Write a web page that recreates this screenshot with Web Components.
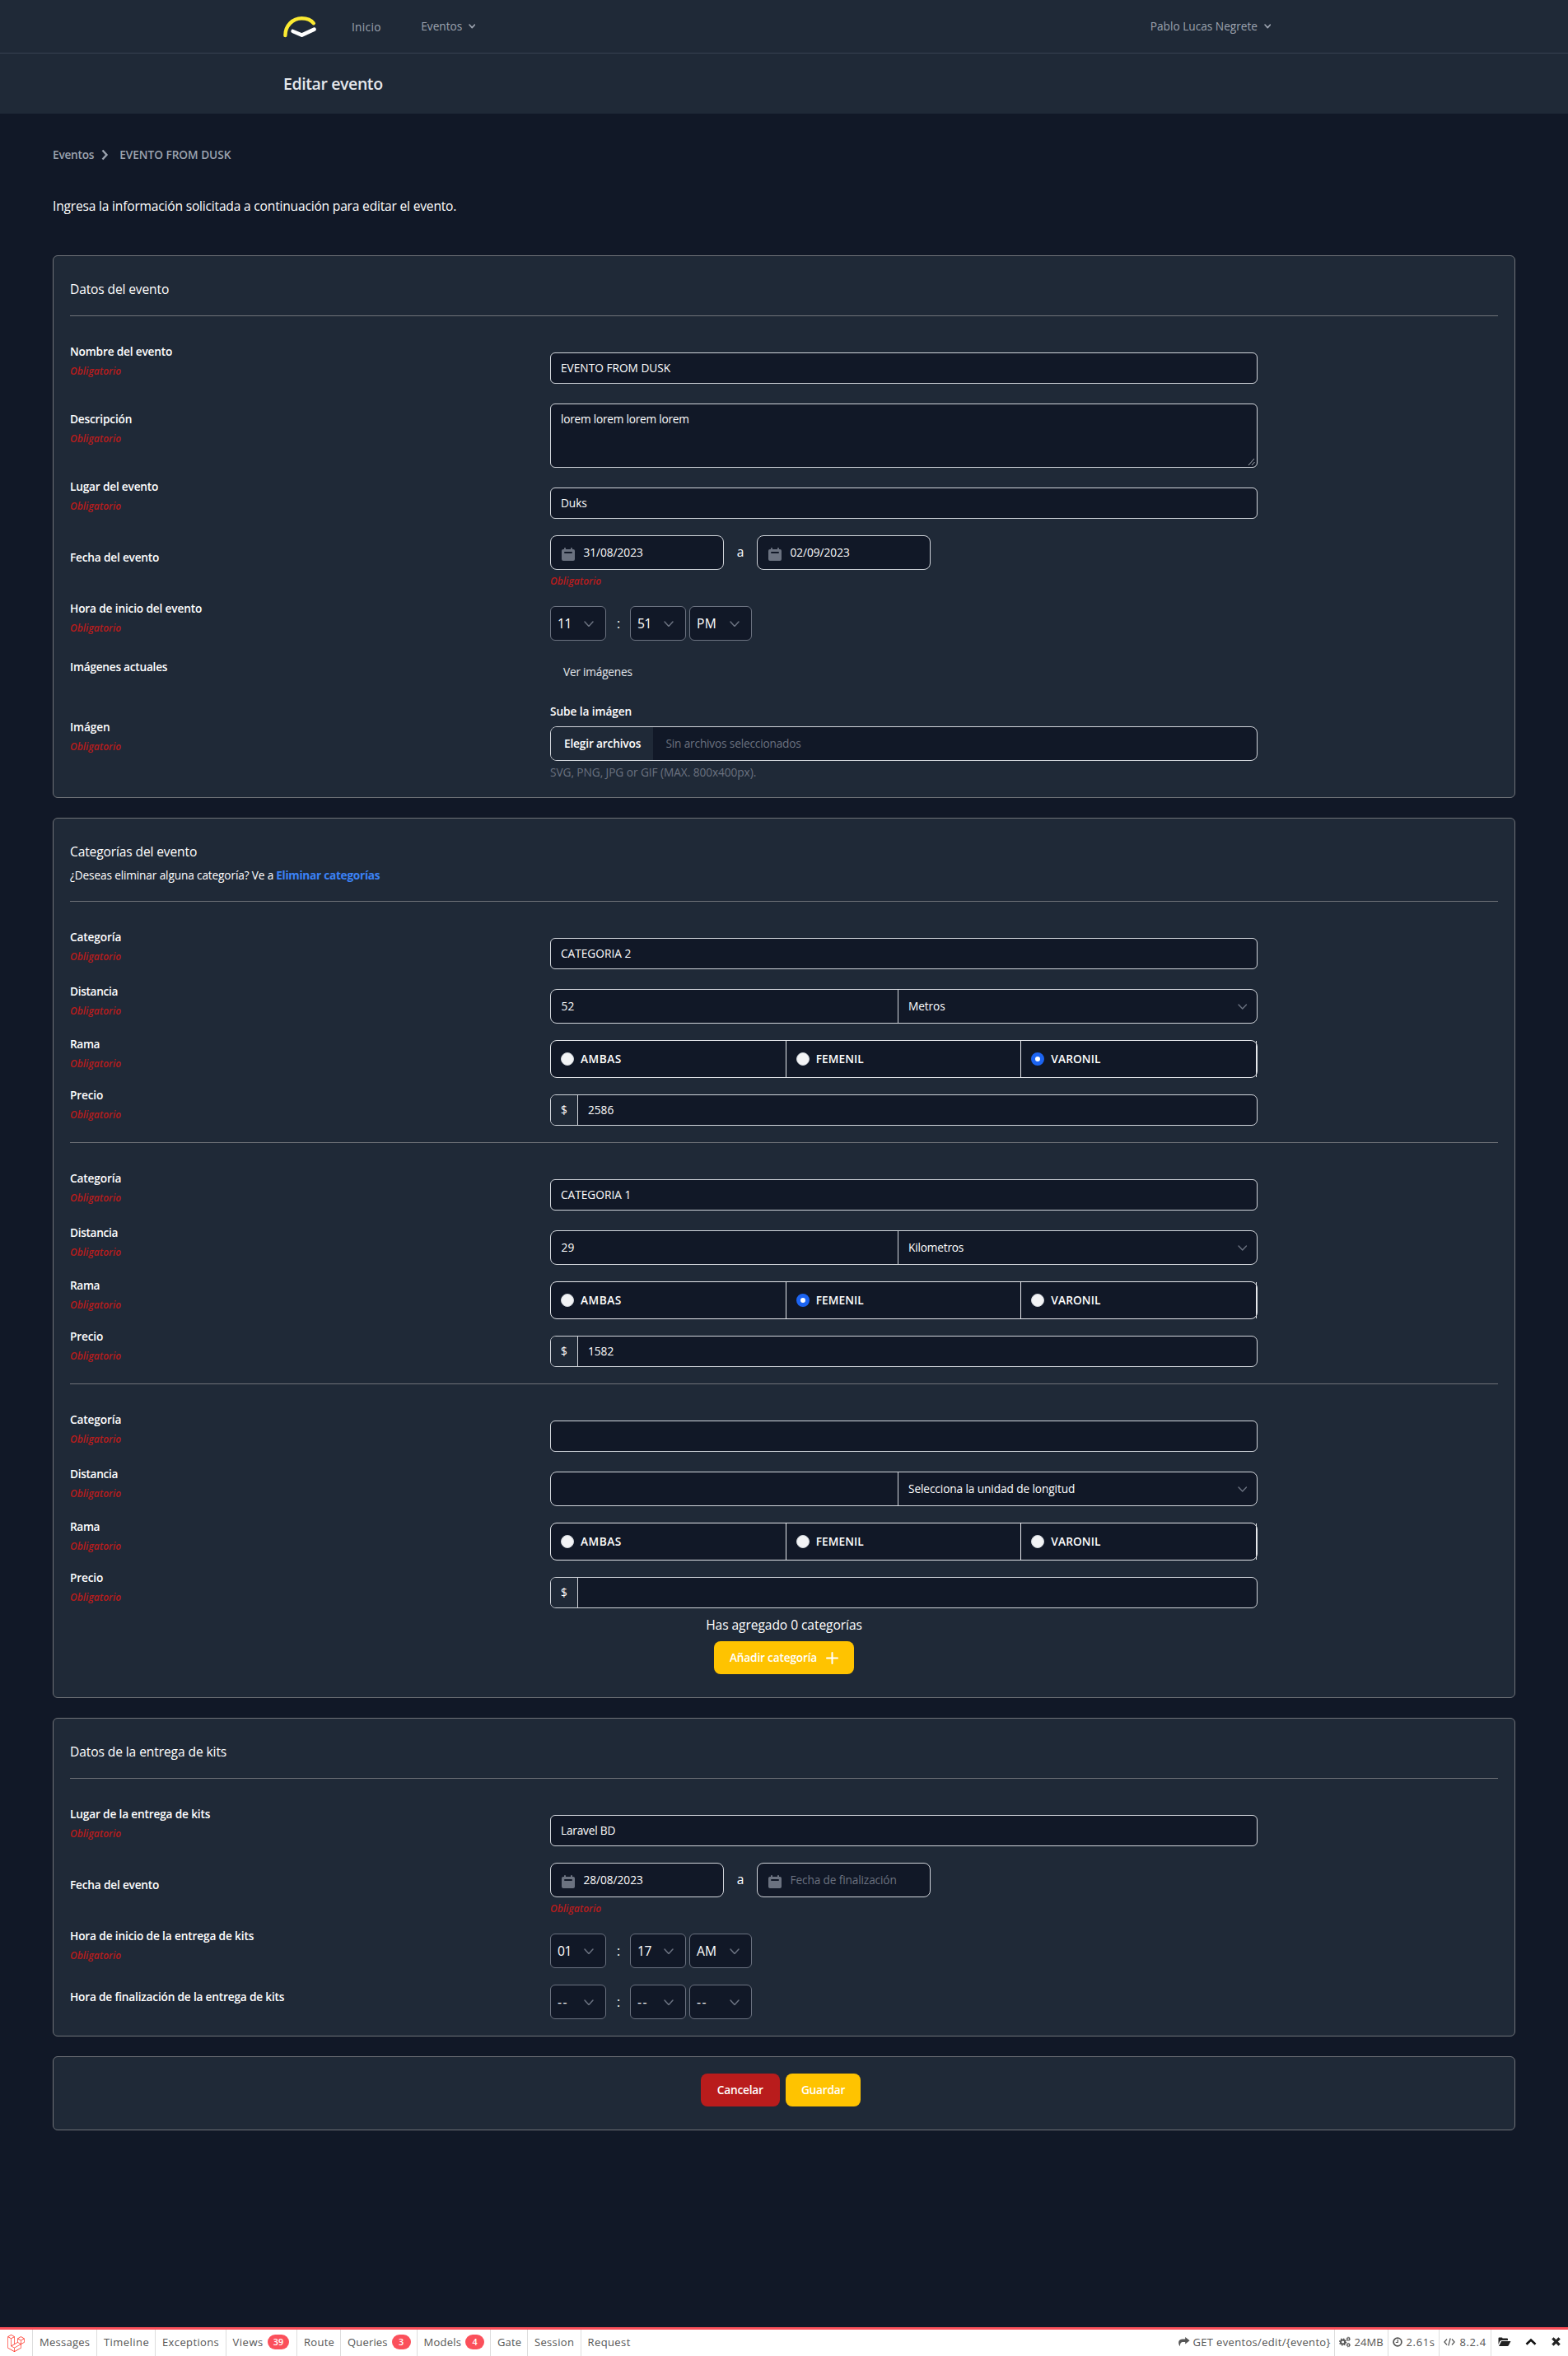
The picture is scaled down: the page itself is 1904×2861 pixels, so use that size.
<!DOCTYPE html>
<html lang="es">
<head>
<meta charset="utf-8">
<title>Editar evento</title>
<style>
html,body{margin:0;padding:0}
body{background:#111827;color:#fff;font-family:"Open Sans","Noto Sans",sans-serif;font-size:13.7px;line-height:20px}
</style>
</head>
<body>
<event-page></event-page>
<script>
const def = (name, render) => customElements.define(name, class extends HTMLElement {
  constructor() { super(); this.attachShadow({mode: 'open'}); }
  connectedCallback() {
    if (this.shadowRoot.childNodes.length) return;
    this.shadowRoot.innerHTML = '<style>*{box-sizing:border-box}</style>' + render(this);
  }
});
const at = (el, n, d = '') => el.getAttribute(n) ?? d;
const fit = (t, w, c = '') => `<fit-text w="${w}" class="${c}">${t}</fit-text>`;
const chevron = (w, h, c, s) => `<svg width="${w}" height="${h}" viewBox="0 0 ${w} ${h}" fill="none" stroke="${c}" stroke-width="${s}" stroke-linecap="round" stroke-linejoin="round"><path d="M1 1 L${w / 2} ${h - 1} L${w - 1} 1"/></svg>`;

def('nav-bar', () => `<style>
:host{display:flex;height:65px;background:#1f2937;border-bottom:1px solid #374151;color:#9ca3af;font-weight:500;padding:0 344px;box-sizing:border-box;align-items:flex-start}
.logo{margin-top:18px;width:42px;height:30px}
a{display:flex;align-items:center;gap:7.500px;height:20px}
.ini{margin:23px 0 0 41px}.ev{margin:22px 0 0 48.500px}.user{margin:22px 17px 0 auto}
</style>
<svg class="logo" viewBox="344 18 42 30" fill="none" stroke-linecap="round"><path d="M346.4 43C346.4 31 355.5 22.2 366.3 22.2C372.5 22.2 378 24.3 380.8 28.3" stroke="#fbea32" stroke-width="4.4"/><path d="M355.6 38L366.5 42.6L381.6 35.6" stroke="#fff" stroke-width="4.6" stroke-linejoin="round"/></svg>
<a class="ini">${fit('Inicio', 34.5)}</a>
<a class="ev">${fit('Eventos', 49)}${chevron(8.5, 5.6, '#9ca3af', 1.6)}</a>
<a class="user">${fit('Pablo Lucas Negrete', 129)}${chevron(8.5, 5.6, '#9ca3af', 1.6)}</a>`);

def('page-header', () => `<style>
:host{display:flex;align-items:center;height:73px;background:#1f2937;padding:0 344px;box-sizing:border-box;color:#e5e7eb;font-size:19.5px;font-weight:600;line-height:28px}
</style><slot></slot>`);

def('bread-crumb', () => `<style>
:host{display:flex;align-items:center;height:20px;color:#9ca3af;font-weight:600}
svg{margin:0 13px 0 9px}
</style>${fit('Eventos', 49)}<svg width="9" height="14" viewBox="0 0 9 14" fill="none" stroke="#9ca3af" stroke-width="2.4"><path d="M1.5 1.5L6.5 7L1.5 12.5"/></svg>${fit('EVENTO FROM DUSK', 134)}`);

def('form-card', el => `<style>
:host{display:block;box-sizing:border-box;background:#1f2937;border:1px solid #6f7278;border-radius:6px;padding:0 20px;margin-bottom:24px}
.head{border-bottom:1px solid #6f7278;padding-top:28px;height:${at(el, 'head', 73)}px;margin-bottom:33px;font-size:15.6px;line-height:24px}
</style>${el.hasAttribute('plain') ? '' : '<div class="head"><slot name="title"></slot></div>'}<slot></slot>`);

def('form-row', el => `<style>
:host{display:grid;grid-template-columns:583px 859px;height:${at(el, 'h')}px}
.l{padding-top:${at(el, 'lt', 0)}px;font-weight:600;display:flex;flex-direction:column;align-items:flex-start}
.c{padding-top:${at(el, 'ct', 0)}px}
</style><div class="l">${fit(at(el, 'label'), at(el, 'lw'))}${el.hasAttribute('req') ? '<req-note></req-note>' : ''}</div><div class="c"><slot></slot></div>`);

def('req-note', () => `<style>
:host{display:block;color:#b91c1c;font-style:italic;font-size:12px;font-weight:600;line-height:16px;padding-top:6px}
</style>${fit('Obligatorio', 61)}`);

def('text-field', el => `<style>
:host{display:flex;box-sizing:border-box;height:${at(el, 'h', 38)}px;border:1px solid #d1d5db;border-radius:6px;background:#111827;padding:8px 12px;justify-content:space-between}
svg{align-self:flex-end;margin:0 -11px -7px 0}
</style><span><slot></slot></span>${el.hasAttribute('resize') ? '<svg width="10" height="10" stroke="#d1d5db" stroke-width=".8"><path d="M1 9L8 1M5 9L8.500 5"/></svg>' : ''}`);

def('date-field', el => `<style>
:host{display:flex;box-sizing:border-box;width:211px;height:42px;border:1px solid #d1d5db;border-radius:8px;background:#111827;padding:10px 11px;gap:8.500px}
svg{margin-top:2px}.ph{color:#6b7280}
</style><svg width="20" height="20" viewBox="0 0 20 20" fill="#6b7280"><path fill-rule="evenodd" d="M6 2a1 1 0 00-1 1v1H4a2 2 0 00-2 2v10a2 2 0 002 2h12a2 2 0 002-2V6a2 2 0 00-2-2h-1V3a1 1 0 10-2 0v1H7V3a1 1 0 00-1-1zm0 5a1 1 0 000 2h8a1 1 0 100-2H6z"/></svg>${el.hasAttribute('value') ? fit(at(el, 'value'), 71) : fit('Fecha de finalización', 128, 'ph')}`);

def('date-range', el => `<style>
:host{display:block}div{display:flex}i{font-style:normal;width:40px;text-align:center;font-size:15.6px;line-height:24px;padding-top:8px}
</style><div><date-field value="${at(el, 'from')}"></date-field><i>a</i><date-field ${el.hasAttribute('to') ? `value="${at(el, 'to')}"` : ''}></date-field></div><req-note></req-note>`);

def('time-field', el => {
  const [h, m, p] = at(el, 'value').split(' ');
  const d = h === '--';
  return `<style>
:host{display:flex;font-size:15.6px;line-height:24px}
span{display:flex;justify-content:space-between;width:68px;height:42px;border:1px solid #6b7280;border-radius:6px;background:#111827;padding:8px 14px 0 8px}
.p{width:75.500px;margin-left:4px}
b{font-weight:400;width:29px;text-align:center;padding:9px 0 0 1px}
svg{margin-top:9px}
</style><span>${fit(h, d ? 12 : 16)}${chevron(12, 7.4, '#6b7280', 1.5)}</span><b>:</b><span>${fit(m, d ? 12 : 16)}${chevron(12, 7.4, '#6b7280', 1.5)}</span><span class="p">${fit(p, d ? 12 : 23)}${chevron(12, 7.4, '#6b7280', 1.5)}</span>`;
});

def('file-field', () => `<style>
:host{display:block}
.t{font-weight:600;display:block;height:28px}
.f{display:flex;height:42px;border:1px solid #d1d5db;border-radius:8px;background:#111827;overflow:hidden;line-height:20px}
.f b{background:#1f2937;width:124px;padding:10px 0 0 16px;font-weight:600}.f span{color:#6b7280;padding:10px 0 0 15.500px}
p{margin:4px 0 0;color:#6b7280;line-height:20px}
</style><span class="t">${fit('Sube la imágen', 98)}</span><div class="f"><b>${fit('Elegir archivos', 92)}</b><span>${fit('Sin archivos seleccionados', 163)}</span></div><p>${fit('SVG, PNG, JPG or GIF (MAX. 800x400px).', 249)}</p>`);

def('distance-field', el => `<style>
:host{display:flex;height:42px;border:1px solid #d1d5db;border-radius:8px;background:#111827;box-sizing:border-box}
.a{width:422px;border-right:1px solid #d1d5db;padding:10px 12.500px}
.b{flex:1;display:flex;justify-content:space-between;padding:10px 12px}
svg{margin-top:7px}
</style><div class="a">${at(el, 'value') ? fit(at(el, 'value'), 15) : ''}</div><div class="b">${fit(at(el, 'unit'), at(el, 'uw'))}${chevron(11.5, 7, '#6b7280', 1.4)}</div>`);

def('radio-group', el => `<style>
:host{display:flex;height:46px;border:1px solid #e5e7eb;border-radius:8px;background:#111827;box-sizing:border-box;font-weight:600}
label{flex:1;display:flex;align-items:center;gap:8px;padding-left:12px;border-right:1px solid #e5e7eb}
i{width:16px;height:16px;border-radius:50%;background:#f3f4f6;border:1px solid #d1d5db}
i.on{background:#fff;border:5px solid #1c64f2}
</style>${[['AMBAS', 48.5], ['FEMENIL', 57], ['VARONIL', 59]].map(([t, w]) => `<label><i class="${at(el, 'value') === t ? 'on' : ''}"></i>${fit(t, w)}</label>`).join('')}`);

def('price-field', el => `<style>
:host{display:flex;height:38px;border:1px solid #d1d5db;border-radius:7px;background:#111827;box-sizing:border-box;overflow:hidden}
b{font-weight:400;width:33px;background:#1f2937;border-right:1px solid #d1d5db;text-align:center;padding-top:8px}
span{padding:8px 12px}
</style><b>$</b><span>${at(el, 'value') ? fit(at(el, 'value'), 30) : ''}</span>`);

def('category-form', el => `<style>
:host{display:block;box-sizing:border-box;height:247px}
:host([line]){height:260px;border-bottom:1px solid #6f7278;margin-bottom:33px}
</style>
<form-row label="Categoría" lw="61" req h="66" ct="11"><text-field>${at(el, 'name') ? fit(at(el, 'name'), 84) : ''}</text-field></form-row>
<form-row label="Distancia" lw="57" req h="64" ct="7"><distance-field value="${at(el, 'dist')}" unit="${at(el, 'unit')}" uw="${at(el, 'uw')}"></distance-field></form-row>
<form-row label="Rama" lw="35" req h="62" ct="5"><radio-group value="${at(el, 'rama')}"></radio-group></form-row>
<form-row label="Precio" lw="39" req h="55" ct="9"><price-field value="${at(el, 'price')}"></price-field></form-row>`);

def('push-button', el => `<style>
:host{display:flex;align-items:center;justify-content:center;height:40px;width:${at(el, 'width')}px;border-radius:8px;background:${at(el, 'color', '#ffc300')};color:#fff;font-weight:600;gap:11px}
</style><slot></slot>`);

const fa = {
  share: '<svg width="14" height="12" viewBox="0 0 14 12" fill="#555"><path d="M8.200 0L13.600 4.200L8.200 8.400V6H5.800C3 6 1.800 7.500 2 11.200C.8 9.800 .2 8.500 .2 6.900C.3 3.700 2.400 2.500 5.800 2.500H8.200Z"/></svg>',
  cogs: '<svg width="14" height="14" viewBox="0 0 14 14" fill="none" stroke="#555"><circle cx="4.600" cy="7" r="2.600" stroke-width="2"/><circle cx="4.600" cy="7" r="4" stroke-width="1.300" stroke-dasharray="1.57"/><circle cx="11.300" cy="3.300" r="1.500" stroke-width="1.200"/><circle cx="11.300" cy="3.300" r="2.300" stroke-width=".8" stroke-dasharray=".9"/><circle cx="11.300" cy="10.700" r="1.500" stroke-width="1.200"/><circle cx="11.300" cy="10.700" r="2.300" stroke-width=".8" stroke-dasharray=".9"/></svg>',
  clock: '<svg width="12" height="12" viewBox="0 0 12 12" fill="none" stroke="#555"><circle cx="6" cy="6" r="4.900" stroke-width="1.700"/><path d="M6.300 3V6.500H3.800" stroke-width="1.200"/></svg>',
  code: '<svg width="14" height="10" viewBox="0 0 14 10" fill="none" stroke="#555" stroke-width="1.200"><path d="M4 1.500L.9 5L4 8.500M10 1.500L13.100 5L10 8.500M8.200 .5L5.800 9.500"/></svg>',
  folder: '<svg width="16" height="12" viewBox="0 0 16 12" fill="#222"><path d="M.5 9V1.500Q.5.5 1.500.5H4.500Q5.500.5 5.500 1.500H11Q12 1.500 12 2.500V4H4.500Q3 4 2.200 5.200ZM4.200 5H15.500L12.800 10.200Q12.300 11 11.500 11H1Z"/></svg>',
  up: '<svg width="14" height="9" viewBox="0 0 14 9" fill="none" stroke="#111" stroke-width="2.600"><path d="M1.500 7.800L7 2.500L12.500 7.800"/></svg>',
  x: '<svg width="11" height="11" viewBox="0 0 11 11" fill="none" stroke="#222" stroke-width="3.300"><path d="M1.400 1.400L9.600 9.600M9.600 1.400L1.400 9.600"/></svg>'
};
def('debug-tab', el => `<style>
:host{display:flex;align-items:center;box-sizing:border-box;height:32px;width:${at(el, 'width')}px;border-right:1px solid #ddd;padding:0 0 2px ${at(el, 'pl', 8)}px;gap:${at(el, 'gap', 5)}px}
b{background:#fb505b;color:#fff;border-radius:9px;height:18px;min-width:23px;padding:0 7px;text-align:center;font-size:10.800px;line-height:18px;font-weight:600}
</style><slot></slot>${el.hasAttribute('count') ? `<b>${at(el, 'count')}</b>` : ''}`);
def('debug-bar', () => `<style>
:host{display:flex;height:35px;border-top:3px solid #fb505b;background:#fff;color:#555;box-sizing:border-box;font-size:13px}
.logo{display:flex;width:40px;height:32px;border-right:1px solid #ddd;padding:6px 0 0 9px}
.r{margin-left:auto;display:flex}
.last{border:0}.ic{display:flex;align-items:center;padding:0 9px 3px 8.500px;height:32px}.ic svg+svg{margin-left:17px}.ic svg+svg+svg{margin-left:18px}
</style><div class="logo"><svg width="21" height="21" viewBox="0 0 24 24" fill="#ff2d20"><path d="M23.642 5.43a.364.364 0 01.014.1v5.149c0 .135-.073.26-.189.326l-4.323 2.49v4.934a.378.378 0 01-.188.326L9.93 23.949a.316.316 0 01-.066.027c-.008.002-.016.008-.024.01a.348.348 0 01-.192 0c-.011-.002-.02-.008-.03-.012-.02-.008-.042-.014-.062-.025L.533 18.755a.376.376 0 01-.189-.326V2.974c0-.033.005-.066.014-.098.003-.012.01-.02.014-.032a.369.369 0 01.023-.058c.004-.013.015-.022.023-.033l.033-.045c.012-.01.025-.018.037-.027.014-.012.027-.024.041-.034H.53L5.043.05a.375.375 0 01.375 0L9.93 2.647h.002c.015.01.027.021.04.033l.038.027c.013.014.02.03.033.045.008.011.02.021.025.033.01.02.017.038.024.058.003.011.01.021.013.032.01.031.014.064.014.098v9.652l3.76-2.164V5.527c0-.033.004-.066.013-.098.003-.01.01-.02.013-.032a.487.487 0 01.024-.059c.007-.012.018-.02.025-.033.012-.015.021-.03.033-.043.012-.012.025-.02.037-.028.014-.01.026-.023.041-.032h.001l4.513-2.598a.375.375 0 01.375 0l4.513 2.598c.016.01.027.021.042.031.012.01.025.018.036.028.013.014.022.03.034.044.008.012.019.021.024.033.011.02.018.04.024.06.006.01.012.021.015.032zm-.74 5.032V6.179l-1.578.908-2.182 1.256v4.283zm-4.51 7.75v-4.287l-2.147 1.225-6.126 3.498v4.325zM1.093 3.624v14.588l8.273 4.761v-4.325l-4.322-2.445-.002-.003H5.04c-.014-.01-.025-.021-.04-.031-.011-.01-.024-.018-.035-.027l-.001-.002c-.013-.012-.021-.025-.031-.04-.01-.011-.021-.022-.028-.036h-.003c-.008-.014-.013-.031-.02-.047-.006-.016-.014-.027-.018-.043a.49.49 0 01-.008-.057c-.002-.014-.006-.027-.006-.041V5.789l-2.18-1.257zM5.23.81L1.47 2.974l3.76 2.164 3.758-2.164zm1.956 13.505l2.182-1.256V3.624l-1.58.91-2.182 1.255v9.435zm11.581-10.95l-3.76 2.163 3.76 2.163 3.759-2.164zm-.376 4.978L16.21 7.087 14.63 6.18v4.283l2.182 1.256 1.58.908zm-8.65 9.654l5.514-3.148 2.756-1.572-3.757-2.163-4.323 2.489-3.941 2.27z"/></svg></div>
${[['Messages', 60, 78], ['Timeline', 54, 71], ['Exceptions', 68, 85.5], ['Views', 36, 86.5, 39], ['Route', 36, 53], ['Queries', 47.5, 92.5, 3], ['Models', 44.5, 89.5, 4], ['Gate', 28, 45], ['Session', 47, 64.5]].map(([t, w, W, c]) => `<debug-tab width="${W}" ${c ? `count="${c}"` : ''}>${fit(t, w)}</debug-tab>`).join('')}
<debug-tab class="last" width="70">${fit('Request', 51)}</debug-tab>
<div class="r"><debug-tab width="190" pl="0" gap="4">${fa.share}${fit('GET eventos/edit/{evento}', 166)}</debug-tab><debug-tab width="65" pl="5">${fa.cogs}${fit('24MB', 34)}</debug-tab><debug-tab width="62" pl="5">${fa.clock}${fit('2.61s', 34)}</debug-tab><debug-tab width="63" pl="5" gap="6">${fa.code}${fit('8.2.4', 31)}</debug-tab>
<div class="ic">${fa.folder}${fa.up}${fa.x}</div></div>`);

def('event-page', () => `<style>
:host{display:flex;flex-direction:column;height:2861px}
main{padding:40px 64px 0}
.intro{margin:40px 0 48px;font-size:15.6px;line-height:24px}
.sub{font-size:13.7px;line-height:20px;margin-top:7px}.sub b{color:#3b82f6;font-weight:700;margin-left:3px}
.add{display:flex;flex-direction:column;align-items:center;height:100px;font-size:15.6px;line-height:24px}
.add push-button{font-size:13.7px;margin-top:8px}
.actions{display:flex;justify-content:center;gap:7.500px;height:88px;padding:20px 8px 0 0;box-sizing:border-box}
debug-bar{margin-top:auto}
</style>
<nav-bar></nav-bar>
<page-header>${fit('Editar evento', 119.5)}</page-header>
<main>
<bread-crumb></bread-crumb>
<div class="intro">${fit('Ingresa la información solicitada a continuación para editar el evento.', 489)}</div>
<form-card><span slot="title">${fit('Datos del evento', 119)}</span>
<form-row label="Nombre del evento" lw="123" req h="73" ct="11"><text-field>${fit('EVENTO FROM DUSK', 132)}</text-field></form-row>
<form-row label="Descripción" lw="74" req h="91" lt="9"><text-field h="78" resize>${fit('lorem lorem lorem lorem', 154.500)}</text-field></form-row>
<form-row label="Lugar del evento" lw="106" req h="69" ct="11"><text-field>${fit('Duks', 30.5)}</text-field></form-row>
<form-row label="Fecha del evento" lw="107" h="79" lt="17"><date-range from="31/08/2023" to="02/09/2023"></date-range></form-row>
<form-row label="Hora de inicio del evento" lw="159" req h="71" ct="7"><time-field value="11 51 PM"></time-field></form-row>
<form-row label="Imágenes actuales" lw="117" h="54" ct="6"><span style="padding-left:16px;color:#e5e7eb">${fit('Ver imágenes', 82.500)}</span></form-row>
<form-row label="Imágen" lw="47.500" req h="114" lt="19"><file-field></file-field></form-row>
</form-card>
<form-card head="101"><div slot="title">${fit('Categorías del evento', 153)}<div class="sub">${fit('¿Deseas eliminar alguna categoría? Ve a', 246)}<b>${fit('Eliminar categorías', 125)}</b></div></div>
<category-form line name="CATEGORIA 2" dist="52" unit="Metros" uw="43.500" rama="VARONIL" price="2586"></category-form>
<category-form line name="CATEGORIA 1" dist="29" unit="Kilometros" uw="66" rama="FEMENIL" price="1582"></category-form>
<category-form unit="Selecciona la unidad de longitud" uw="201"></category-form>
<div class="add">${fit('Has agregado 0 categorías', 188.5)}<push-button width="170">${fit('Añadir categoría', 105)}<svg width="15" height="15" stroke="#fff" stroke-width="2" stroke-linecap="round"><path d="M7.500 1V14M1 7.500H14"/></svg></push-button></div>
</form-card>
<form-card><span slot="title">${fit('Datos de la entrega de kits', 189)}</span>
<form-row label="Lugar de la entrega de kits" lw="169" req h="69" ct="11"><text-field>${fit('Laravel BD', 65)}</text-field></form-row>
<form-row label="Fecha del evento" lw="107" h="79" lt="17"><date-range from="28/08/2023"></date-range></form-row>
<form-row label="Hora de inicio de la entrega de kits" lw="222" req h="69" ct="7"><time-field value="01 17 AM"></time-field></form-row>
<form-row label="Hora de finalización de la entrega de kits" lw="259" h="62" lt="5"><time-field value="-- -- --"></time-field></form-row>
</form-card>
<form-card plain><div class="actions"><push-button width="95.500" color="#b91c1c">${fit('Cancelar', 55)}</push-button><push-button width="91">${fit('Guardar', 52)}</push-button></div></form-card>
</main>
<debug-bar></debug-bar>`);

/* Text run whose tracking is spread so that it fills the width given in "w". */
customElements.define('fit-text', class extends HTMLElement {
  connectedCallback() {
    if (this.shadowRoot) return;
    this.attachShadow({mode: 'open'}).innerHTML = '<style>:host{display:inline-block;white-space:nowrap;line-height:inherit;vertical-align:top}</style><slot></slot>';
    const w = parseFloat(this.getAttribute('w')) + 1.2;
    const n = this.textContent.length;
    this.style.letterSpacing = ((w - this.getBoundingClientRect().width) / n).toFixed(3) + 'px';
  }
});
</script>
</body>
</html>
